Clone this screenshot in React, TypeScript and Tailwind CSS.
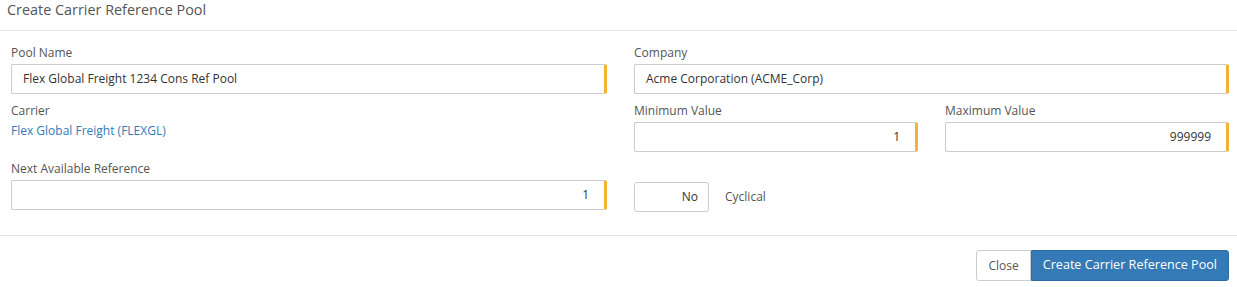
export default function App() {
  const font = { fontFamily: '"Open Sans", "Liberation Sans", sans-serif' }
  return (
    <div className="w-[1237px] h-[287px] bg-white text-[#333]" style={font}>
      <div className="h-[31px] border-b border-[#e5e5e5] px-[7px] pt-[1px]">
        <h4 className="text-[14.4px] leading-[18px] text-[#555]">Create Carrier Reference Pool</h4>
      </div>

      <div className="pl-[11px] pr-[8px] pt-[13px] pb-[23px] border-b border-[#e5e5e5] grid grid-cols-[596px_595px] gap-x-[27px]">
        <div className="flex flex-col">
          <Label text="Pool Name" />
          <TextInput value="Flex Global Freight 1234 Cons Ref Pool" />
          <div className="mt-[8px]">
            <Label text="Carrier" />
          </div>
          <a className="text-[12px] leading-[18px] text-[#337ab7]">Flex Global Freight (FLEXGL)</a>
          <div className="mt-[20px]">
            <Label text="Next Available Reference" />
          </div>
          <TextInput value="1" right />
        </div>

        <div className="flex flex-col">
          <Label text="Company" />
          <TextInput value="Acme Corporation (ACME_Corp)" />
          <div className="mt-[8px] grid grid-cols-[284px_284px] gap-x-[27px]">
            <div>
              <Label text="Minimum Value" />
              <TextInput value="1" right />
            </div>
            <div>
              <Label text="Maximum Value" />
              <TextInput value="999999" right />
            </div>
          </div>
          <div className="mt-[30px] flex items-center gap-[16px]">
            <div className="w-[75px] h-[30px] border border-[#ccc] rounded-[3px] flex items-center justify-end pr-[10px] text-[12px]">
              No
            </div>
            <span className="text-[12px] text-[#555]">Cyclical</span>
          </div>
        </div>
      </div>

      <div className="flex justify-end pr-[8px] pt-[14px]">
        <button className="h-[31px] px-[11px] text-[12px] text-[#555] border border-[#ccc] rounded-l-[3px] bg-white">
          Close
        </button>
        <button className="h-[31px] px-[11px] text-[12.6px] text-white bg-[#337ab7] border border-[#2e6da4] rounded-r-[3px]">
          Create Carrier Reference Pool
        </button>
      </div>
    </div>
  )
}

function Label({ text }: { text: string }) {
  return <div className="text-[12px] leading-[18px] text-[#555] mb-[2px]">{text}</div>
}

function TextInput({ value, right }: { value: string; right?: boolean }) {
  return (
    <div
      className={
        'h-[30px] border border-[#ccc] border-r-[3px] border-r-[#f5b335] rounded-[2px] flex items-center px-[11px] text-[12px] text-[#333] ' +
        (right ? 'justify-end pr-[15px]' : '')
      }
    >
      {value}
    </div>
  )
}
